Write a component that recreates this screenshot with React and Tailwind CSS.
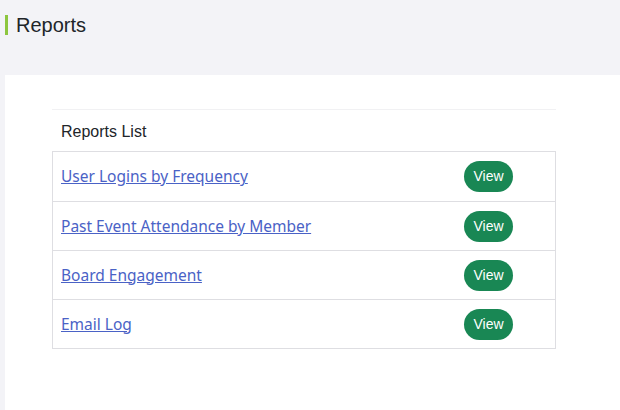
import React from 'react';

const reports = [
  'User Logins by Frequency',
  'Past Event Attendance by Member',
  'Board Engagement',
  'Email Log',
];

export default function App() {
  return (
    <div className="min-h-[410px] bg-[#f3f3f7] font-['Liberation_Sans',Arial,sans-serif] text-[#212529]">
      <div className="flex h-[75px] items-start pl-[5px] pt-[14px]">
        <div className="mt-[1px] h-[20px] w-[3px] bg-[#8dc63f]" />
        <h1 className="ml-[8px] text-[20px] leading-[22px]">Reports</h1>
      </div>
      <div className="ml-[5px] min-h-[335px] bg-white pl-[47px] pr-[64px] pt-[34px]">
        <div className="border-t border-[#f1f1f3]">
          <div className="px-[9px] pb-[9px] pt-[12px] text-[16px] leading-[20px]">Reports List</div>
          <div className="border border-[#dedee2]">
            {reports.map((name, i) => (
              <div
                key={name}
                className={
                  'flex h-[49px] items-center justify-between pl-[8px] pr-[42px] ' +
                  (i > 0 ? 'border-t border-[#dedee2]' : '')
                }
              >
                <a
                  href="#"
                  className="mt-[1px] font-['Noto_Sans',sans-serif] text-[15.5px] text-[#4a62c6] underline"
                >
                  {name}
                </a>
                <button className="h-[31px] w-[49px] rounded-full bg-[#198754] text-[14px] text-white">
                  View
                </button>
              </div>
            ))}
          </div>
        </div>
      </div>
    </div>
  );
}
